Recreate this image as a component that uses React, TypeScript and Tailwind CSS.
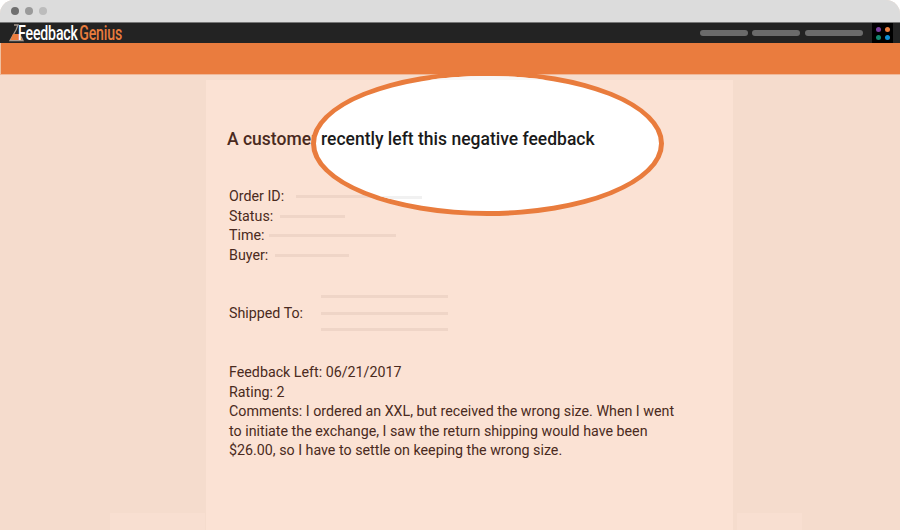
export default function App() {
  const font = { fontFamily: "Roboto, sans-serif" };
  return (
    <div className="relative w-[900px] h-[530px] overflow-hidden bg-white" style={font}>
      <div className="flex flex-col w-full h-full rounded-t-[14px] overflow-hidden bg-[#f5dccd]">
        <div className="h-[22px] shrink-0 bg-[#dcdcdc] flex items-center gap-[6px] pl-[11px]">
          <span className="w-2 h-2 rounded-full bg-[#6f6f6f]" />
          <span className="w-2 h-2 rounded-full bg-[#9a9a9a]" />
          <span className="w-2 h-2 rounded-full bg-[#bcbcbc]" />
        </div>
        <div className="relative h-[21px] shrink-0 bg-[#232323] flex items-center pl-[8px] border-t border-[#777]">
          <svg width="17" height="18" viewBox="0 0 17 18" className="shrink-0">
            <path d="M6 1h4L8 6 2 16.500h13l-2-4" fill="none" stroke="#a89a90" strokeWidth="1.3" />
            <path d="M5 10h7l2 6H2.500z" fill="#e97c3d" />
          </svg>
          <span
            className="-ml-[7px] inline-block text-[20px] leading-[20px] font-medium tracking-[-0.2px] text-white whitespace-nowrap"
            style={{ fontFamily: "Roboto, sans-serif", transform: "scaleX(0.705)", transformOrigin: "left" }}
          >
            Feedback<span className="ml-[2px] text-[#e97c3d]">Genius</span>
          </span>
          <div className="ml-auto flex items-center h-full">
            <span className="w-[48px] h-[6px] rounded-full bg-[#6b6b6b]" />
            <span className="ml-[4px] w-[48px] h-[6px] rounded-full bg-[#6b6b6b]" />
            <span className="ml-[5px] w-[58px] h-[6px] rounded-full bg-[#6b6b6b]" />
            <div className="ml-[9px] mr-[7px] w-[21px] h-full bg-black grid grid-cols-2 place-content-center justify-items-center gap-[3px] px-[3px]">
              <span className="w-[5px] h-[5px] rounded-full bg-[#7b3fa0]" />
              <span className="w-[5px] h-[5px] rounded-full bg-[#e97c3d]" />
              <span className="w-[5px] h-[5px] rounded-full bg-[#12876f]" />
              <span className="w-[5px] h-[5px] rounded-full bg-[#0e8fd6]" />
            </div>
          </div>
        </div>
        <div className="h-[31px] shrink-0 bg-[#ea7c3e] border-l border-[#f0c0a0]" />
        <div className="h-[1px] shrink-0 bg-[#f0b898]" />
        <div className="relative flex-1 pt-[5px] bg-[#f5dccd]">
          <div className="ml-[206px] w-[527px] h-full bg-[#fbe2d4] text-[#4a2a20] text-[14.25px] leading-[19.5px] pt-[48px] pl-[23px] pr-[50px]">
            <h1 className="text-[17.5px] leading-[22px] font-medium text-[#4a2a20] ml-[-2px]">
              A customer
            </h1>
            <div className="mt-[37px] flex items-center h-[19.5px]">
              Order ID:<span className="ml-[12px] w-[127px] h-[3px] bg-[#efd5c7]" />
            </div>
            <div className="flex items-center h-[19.5px]">
              Status:<span className="ml-[7px] w-[65px] h-[3px] bg-[#efd5c7]" />
            </div>
            <div className="flex items-center h-[19.5px]">
              Time:<span className="ml-[5px] w-[127px] h-[3px] bg-[#efd5c7]" />
            </div>
            <div className="flex items-center h-[19.5px]">
              Buyer:<span className="ml-[7px] w-[74px] h-[3px] bg-[#efd5c7]" />
            </div>
            <div className="mt-[23px] flex items-center h-[50px]">
              <span className="w-[92px] pt-[2px]">Shipped To:</span>
              <div className="flex flex-col gap-[13.5px]">
                <span className="w-[127px] h-[3px] bg-[#efd5c7]" />
                <span className="w-[127px] h-[3px] bg-[#efd5c7]" />
                <span className="w-[127px] h-[3px] bg-[#efd5c7]" />
              </div>
            </div>
            <p className="mt-[25px]">Feedback Left: 06/21/2017</p>
            <p>Rating: 2</p>
            <p>
              Comments: I ordered an XXL, but received the wrong size. When I went to initiate the exchange, I saw the return shipping would have been $26.00, so I have to settle on keeping the wrong size.
            </p>
          </div>
          <div className="absolute left-[110px] bottom-0 w-[95px] h-[17px] bg-[#f8dfd1]" />
          <div className="absolute left-[737px] bottom-0 w-[65px] h-[17px] bg-[#f8dfd1]" />
        </div>
      </div>
      <div className="absolute left-[311px] top-[71px] w-[353px] h-[145px] rounded-[50%] bg-white border-[5px] border-[#e97c3d] overflow-hidden">
        <span className="absolute left-0 top-0 w-full h-[4px] bg-[#f7f7f7]" />
        <span className="absolute left-0 top-[120px] w-[106px] h-[3px] bg-[#f1f1f1]" />
        <span className="absolute left-[5px] top-[52px] whitespace-nowrap text-[17.5px] leading-[22px] font-medium text-[#1a1a1a]">
          recently left this negative feedback
        </span>
      </div>
    </div>
  );
}
